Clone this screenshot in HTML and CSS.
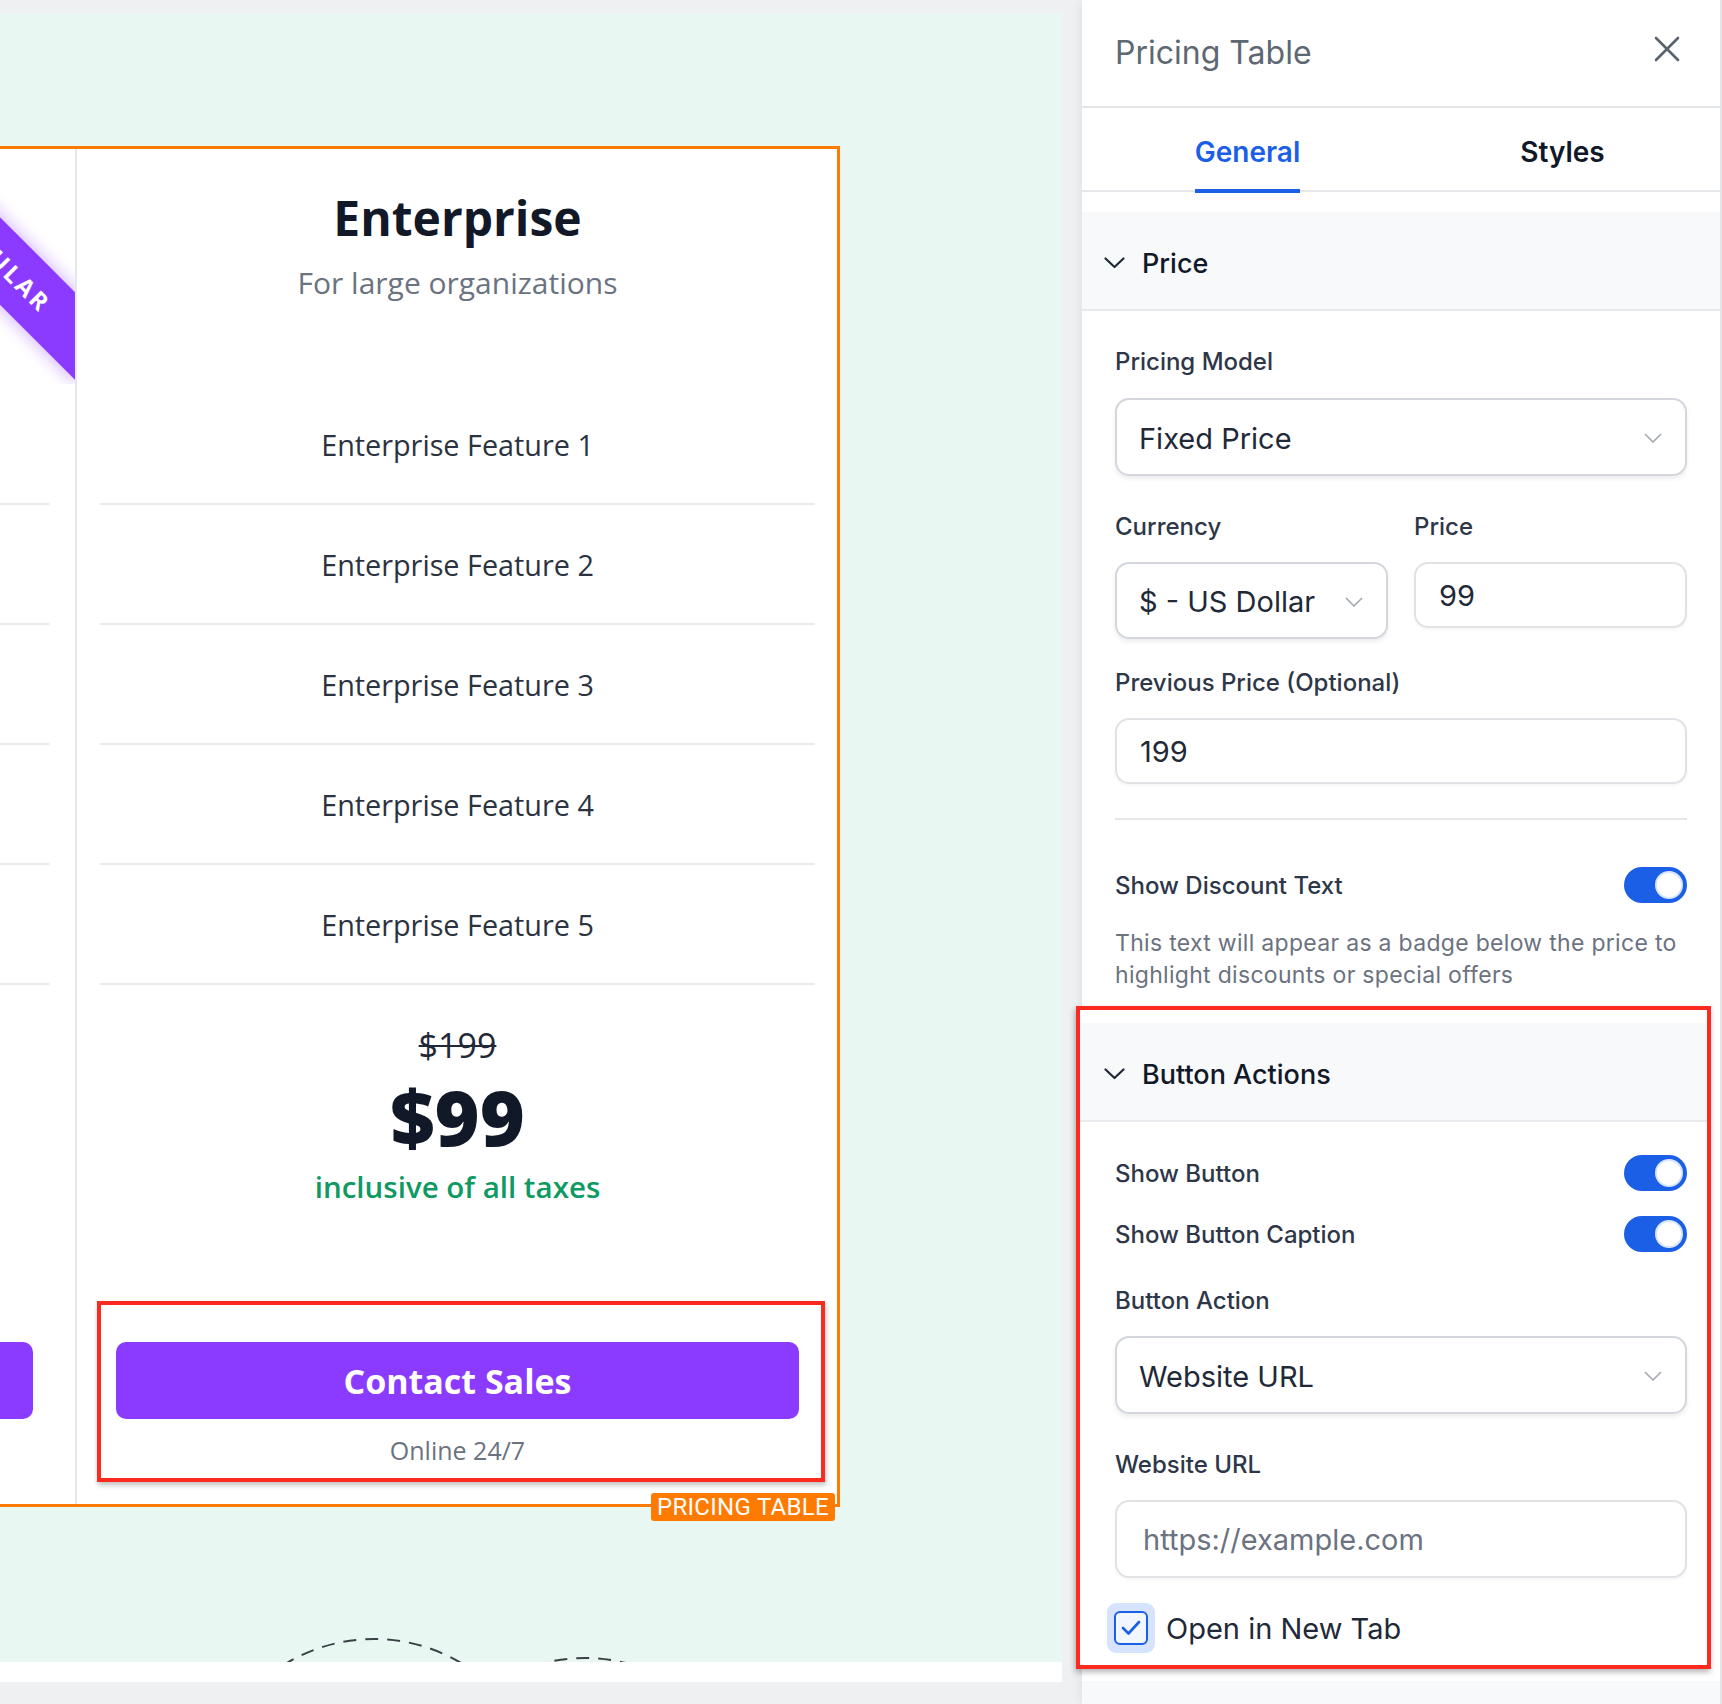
FILE: index.html
```html
<!DOCTYPE html>
<html lang="en">
<head>
<meta charset="utf-8">
<title>Pricing Table Editor</title>
<link rel="stylesheet" href="styles.css">
</head>
<body>
<div class="editor">
  <div class="canvas">
    <div class="stage">
      <div class="ptable">
        <div class="col-prev">
          <div class="ribbon-wrap"><div class="ribbon">POPULAR</div></div>
          <ul class="features prev-features"><li></li><li></li><li></li><li></li><li></li></ul>
          <div class="prev-btn"></div>
        </div>
        <div class="col-main">
          <h2 class="plan-name">Enterprise</h2>
          <p class="plan-sub">For large organizations</p>
          <ul class="features">
            <li>Enterprise Feature 1</li>
            <li>Enterprise Feature 2</li>
            <li>Enterprise Feature 3</li>
            <li>Enterprise Feature 4</li>
            <li>Enterprise Feature 5</li>
          </ul>
          <div class="old-price">$199</div>
          <div class="price">$99</div>
          <div class="tax">inclusive of all taxes</div>
          <div class="cta-box">
            <div class="cta">Contact Sales</div>
            <div class="caption">Online 24/7</div>
          </div>
        </div>
        <span class="sel-label">PRICING TABLE</span>
      </div>
      <svg class="deco" width="1062" height="32" viewBox="0 0 1062 32">
        <circle cx="374" cy="179" r="170" fill="none" stroke="#3b4046" stroke-width="2" stroke-dasharray="13 9"/>
        <circle cx="585" cy="198" r="170" fill="none" stroke="#3b4046" stroke-width="2" stroke-dasharray="13 9"/>
      </svg>
    </div>
  </div>
</div>

<aside class="panel">
  <div class="p-head">
    <span class="p-title">Pricing Table</span>
    <svg class="close" width="26" height="26" viewBox="0 0 26 26"><path d="M2 2 L24 24 M24 2 L2 24" stroke="#59636c" stroke-width="2.6" stroke-linecap="round"/></svg>
  </div>
  <div class="tabs">
    <div class="tab active"><span>General</span></div>
    <div class="tab"><span>Styles</span></div>
  </div>

  <section class="sec sec-price">
    <div class="sec-head">
      <svg width="21" height="12" viewBox="0 0 21 12"><polyline points="1.5,1.5 10.5,10 19.5,1.5" fill="none" stroke="#1f2937" stroke-width="2.2" stroke-linecap="round" stroke-linejoin="round"/></svg>
      <span>Price</span>
    </div>
    <div class="sec-body">
      <div class="field-label m35">Pricing Model</div>
      <div class="select m20"><span>Fixed Price</span><svg width="18" height="10" viewBox="0 0 18 10"><polyline points="1,1 9,9 17,1" fill="none" stroke="#a3a9b2" stroke-width="1.6"/></svg></div>
      <div class="grid2 m35">
        <div>
          <div class="field-label">Currency</div>
          <div class="select small m19"><span>$ - US Dollar</span><svg width="18" height="10" viewBox="0 0 18 10"><polyline points="1,1 9,9 17,1" fill="none" stroke="#a3a9b2" stroke-width="1.6"/></svg></div>
        </div>
        <div>
          <div class="field-label">Price</div>
          <div class="input m19">99</div>
        </div>
      </div>
      <div class="field-label m28">Previous Price (Optional)</div>
      <div class="input m19">199</div>
      <div class="divider"></div>
      <div class="toggle-row m47"><span>Show Discount Text</span><span class="toggle"></span></div>
      <p class="desc">This text will appear as a badge below the price to highlight discounts or special offers</p>
    </div>
  </section>

  <section class="sec hl">
    <div class="sec-head">
      <svg width="21" height="12" viewBox="0 0 21 12"><polyline points="1.5,1.5 10.5,10 19.5,1.5" fill="none" stroke="#1f2937" stroke-width="2.2" stroke-linecap="round" stroke-linejoin="round"/></svg>
      <span>Button Actions</span>
    </div>
    <div class="sec-body">
      <div class="toggle-row m33"><span>Show Button</span><span class="toggle"></span></div>
      <div class="toggle-row m25"><span>Show Button Caption</span><span class="toggle"></span></div>
      <div class="field-label m33">Button Action</div>
      <div class="select m19"><span>Website URL</span><svg width="18" height="10" viewBox="0 0 18 10"><polyline points="1,1 9,9 17,1" fill="none" stroke="#a3a9b2" stroke-width="1.6"/></svg></div>
      <div class="field-label m35">Website URL</div>
      <div class="input tall m19"><span class="ph">https://example.com</span></div>
      <div class="check-row">
        <span class="check-hl"><span class="check-box"><svg width="24" height="20" viewBox="0 0 24 20"><polyline points="4,10 9.5,15.5 20,4" fill="none" stroke="#1a5fe6" stroke-width="2.6" stroke-linecap="round" stroke-linejoin="round"/></svg></span></span>
        <span class="check-text">Open in New Tab</span>
      </div>
    </div>
  </section>
  <div class="sec-rest"></div>
</aside>
</body>
</html>
```

FILE: styles.css
```css
html, body {
  margin: 0;
  padding: 0;
}
body {
  width: 1722px;
  height: 1704px;
  overflow: hidden;
  background: #eef0f2;
  display: flex;
  align-items: flex-start;
  font-family: Inter, "Noto Sans", sans-serif;
}

/* ---------- left canvas ---------- */
.editor {
  width: 1062px;
  flex: none;
  padding-top: 13px;
}
.canvas {
  background: #fff;
  height: 1669px;
}
.stage {
  background: #e8f7f1;
  height: 1649px;
  box-sizing: border-box;
  padding-top: 133px;
  display: flex;
  flex-direction: column;
  overflow: hidden;
}
.ptable {
  position: relative;
  flex: none;
  display: flex;
  width: 850px;
  margin-left: -10px;
  box-sizing: border-box;
  border: 3px solid #ff7a00;
  background: #fff;
  font-family: "Open Sans", "Noto Sans", sans-serif;
}
.col-prev {
  position: relative;
  flex: none;
  width: 82px;
  overflow: hidden;
  border-right: 2px solid #e6e7ea;
}
.ribbon-wrap {
  position: absolute;
  top: 0;
  right: 0;
  width: 235px;
  height: 235px;
  overflow: hidden;
}
.ribbon {
  position: absolute;
  left: -31px;
  top: 60px;
  width: 340px;
  height: 62px;
  line-height: 62px;
  box-sizing: border-box;
  padding-left: 58px;
  transform: rotate(45deg);
  background: #8b3bff;
  color: #fff;
  text-align: center;
  font-weight: 700;
  font-size: 24px;
  letter-spacing: 3px;
  box-shadow: 0 0 18px rgba(139, 59, 255, 0.45);
}
.features {
  list-style: none;
  margin: 84px 0 0;
  padding: 0;
}
.features li {
  height: 118px;
  border-bottom: 2px solid #e8e9ec;
  display: flex;
  align-items: center;
  justify-content: center;
  font-size: 28.8px;
  color: #2b3340;
}
.prev-features {
  margin: 236px 26px 0 0;
}
.prev-btn {
  margin-top: 357px;
  width: 40px;
  height: 77px;
  background: #8b3bff;
  border-radius: 0 10px 10px 0;
}
.col-main {
  flex: 1;
  padding: 40px 22px 22px 23px;
  text-align: center;
}
.plan-name {
  margin: 0;
  font-size: 48px;
  line-height: 58px;
  font-weight: 700;
  color: #111827;
}
.plan-sub {
  margin: 18px 0 0;
  font-size: 30px;
  line-height: 36px;
  color: #6b7280;
}
.old-price {
  margin-top: 40px;
  font-size: 34px;
  line-height: 40px;
  color: #1f2937;
  text-decoration: line-through;
  text-decoration-thickness: 2px;
}
.price {
  margin-top: 12px;
  font-size: 77px;
  line-height: 80px;
  font-weight: 800;
  color: #111827;
}
.tax {
  margin-top: 10px;
  font-size: 29.5px;
  line-height: 40px;
  font-weight: 600;
  color: #0e9a62;
}
.cta-box {
  margin: 94px -10px 0 -3px;
  border: 4px solid #ff2a1f;
  padding: 37px 22px 11px 15px;
  box-shadow: 1px 3px 5px rgba(0, 0, 0, 0.25);
}
.cta {
  height: 77px;
  border-radius: 10px;
  background: #8b3bff;
  color: #fff;
  font-size: 34px;
  font-weight: 700;
  display: flex;
  align-items: center;
  justify-content: center;
}
.caption {
  margin-top: 14px;
  font-size: 25px;
  line-height: 34px;
  color: #6b7280;
}
.sel-label {
  position: absolute;
  right: 2px;
  bottom: -17px;
  height: 28px;
  line-height: 28px;
  padding: 0 6px;
  background: #ff7a00;
  color: #fff;
  border-radius: 3px;
  font-family: Roboto, "Liberation Sans", sans-serif;
  font-size: 24px;
  letter-spacing: 0.3px;
}
.deco {
  display: block;
  margin-top: auto;
  flex: none;
}

/* ---------- right panel ---------- */
.panel {
  width: 640px;
  height: 1704px;
  flex: none;
  box-sizing: border-box;
  margin-left: 20px;
  background: #fff;
  border-right: 2px solid #e3e5e8;
  box-shadow: -3px 0 8px rgba(0, 0, 0, 0.05);
  display: flex;
  flex-direction: column;
  color: #1f2937;
}
.p-head {
  height: 108px;
  flex: none;
  box-sizing: border-box;
  border-bottom: 2px solid #e3e5e8;
  display: flex;
  align-items: center;
  justify-content: space-between;
  padding: 0 40px 0 33px;
}
.p-title {
  font-size: 32px;
  color: #5d6873;
  margin-top: -2px;
}
.close {
  margin-top: -8px;
}
.tabs {
  height: 84px;
  flex: none;
  box-sizing: border-box;
  border-bottom: 2px solid #e5e7eb;
  display: flex;
  padding-left: 8px;
}
.tab {
  flex: 1;
  display: flex;
  justify-content: center;
  align-items: flex-end;
}
.tab span {
  font-size: 28px;
  line-height: 34px;
  font-weight: 600;
  color: #111827;
  padding-bottom: 20px;
  margin-bottom: -3px;
  border-bottom: 4px solid transparent;
}
.tab.active span {
  color: #1a5fe6;
  border-bottom-color: #1a5fe6;
}
.sec {
  flex: none;
}
.sec-price {
  margin-top: 20px;
}
.sec-head {
  height: 99px;
  box-sizing: border-box;
  background: #f8f9fb;
  border-bottom: 2px solid #e8eaee;
  display: flex;
  align-items: center;
  gap: 17px;
  padding-left: 22px;
  padding-top: 5px;
  font-size: 27px;
  font-weight: 500;
  color: #111827;
}
.sec-body {
  padding: 0 33px;
}
.field-label {
  font-size: 24px;
  line-height: 32px;
  font-weight: 500;
  color: #2d3748;
}
.m19 { margin-top: 19px; }
.m20 { margin-top: 20px; }
.m25 { margin-top: 25px; }
.m28 { margin-top: 28px; }
.m33 { margin-top: 33px; }
.m35 { margin-top: 35px; }
.m47 { margin-top: 47px; }
.select {
  height: 78px;
  box-sizing: border-box;
  border: 2px solid #d3d6dc;
  border-radius: 14px;
  box-shadow: 0 3px 4px rgba(0, 0, 0, 0.07);
  display: flex;
  align-items: center;
  justify-content: space-between;
  padding: 2px 23px 0 22px;
  font-size: 29px;
  color: #1f2937;
}
.select.small {
  height: 77px;
}
.input {
  height: 66px;
  box-sizing: border-box;
  border: 2px solid #e0e2e6;
  border-radius: 14px;
  box-shadow: 0 2px 3px rgba(0, 0, 0, 0.04);
  display: flex;
  align-items: center;
  padding: 0 23px;
  font-size: 29px;
  color: #1f2937;
}
.input.tall {
  height: 78px;
  padding-left: 26px;
}
.ph {
  color: #6b7280;
}
.grid2 {
  display: grid;
  grid-template-columns: 1fr 1fr;
  column-gap: 26px;
  align-items: start;
}
.divider {
  margin-top: 34px;
  height: 2px;
  background: #e5e7eb;
}
.toggle-row {
  height: 36px;
  display: flex;
  align-items: center;
  justify-content: space-between;
  font-size: 24px;
  font-weight: 500;
  color: #2d3748;
}
.toggle {
  position: relative;
  width: 63px;
  height: 36px;
  border-radius: 18px;
  background: #1a5fe6;
}
.toggle::after {
  content: "";
  position: absolute;
  right: 4px;
  top: 4px;
  width: 24px;
  height: 24px;
  border-radius: 50%;
  background: #fff;
  border: 2px solid #d8e5fc;
}
.desc {
  margin: 24px 0 0;
  font-size: 23px;
  line-height: 32px;
  letter-spacing: 0.3px;
  color: #6b7280;
}
.hl {
  margin: 15px 0 0 -6px;
  width: 635px;
  box-sizing: border-box;
  border: 4px solid #ff2a1f;
  padding: 13px 0 12px;
  box-shadow: -1px 3px 6px rgba(0, 0, 0, 0.3);
  position: relative;
  z-index: 2;
  background: #fff;
}
.hl .sec-head {
  padding-left: 24px;
}
.hl .sec-body {
  padding: 0 20px 0 35px;
}
.check-row {
  margin: 25px 0 0 -8px;
  display: flex;
  align-items: center;
  gap: 11px;
}
.check-hl {
  width: 48px;
  height: 50px;
  border-radius: 9px;
  background: #d5e3fd;
  display: flex;
  align-items: center;
  justify-content: center;
}
.check-box {
  width: 34px;
  height: 34px;
  box-sizing: border-box;
  border: 2.5px solid #1a5fe6;
  border-radius: 6px;
  background: #f2f6ff;
  display: flex;
  align-items: center;
  justify-content: center;
}
.check-text {
  font-size: 29px;
  color: #1f2937;
}
.sec-rest {
  flex: 1;
  margin-top: 12px;
  background: #f8f9fb;
}
```
